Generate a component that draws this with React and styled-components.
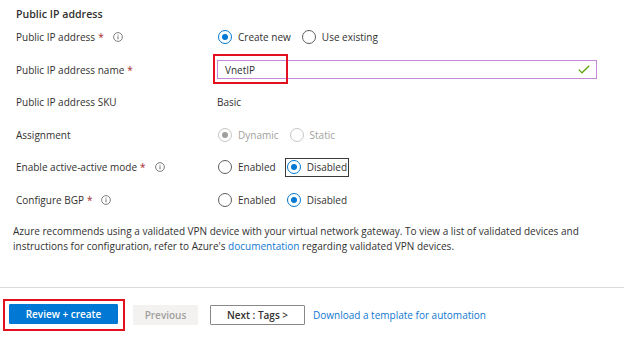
import React from "react";
import styled, { createGlobalStyle } from "styled-components";

const Global = createGlobalStyle`
  html, body { margin: 0; padding: 0; background: #fff; }
  body { font-family: "Open Sans", "Noto Sans", "Liberation Sans", sans-serif; color: #323130; }
  #root { width: 624px; height: 352px; overflow: hidden; }
`;

const Page = styled.div`
  width: 624px;
  height: 352px;
  display: flex;
  flex-direction: column;
  background: #fff;
`;

const Section = styled.div`
  display: flex;
  flex-direction: column;
  padding: 0 0 0 16px;
`;

const Title = styled.div`
  height: 27px;
  display: flex;
  align-items: center;
  font-size: 10.6px;
  font-weight: 600;
  color: #323130;
`;

const Rows = styled.div`
  display: flex;
  flex-direction: column;
  gap: 12.5px;
`;

const Row = styled.div`
  display: grid;
  grid-template-columns: 201px 1fr;
  align-items: center;
  height: 20px;
`;

const Label = styled.div`
  display: flex;
  align-items: center;
  font-size: 10px;
  color: #323130;
  white-space: nowrap;
`;

const Req = styled.span`
  color: #a4262c;
  margin-left: 3px;
`;

const InfoWrap = styled.span`
  display: inline-flex;
  margin-left: 9px;
`;

const Info = () => (
  <InfoWrap>
    <svg width="10" height="10" viewBox="0 0 10 10">
      <circle cx="5" cy="5" r="4.4" fill="none" stroke="#605e5c" strokeWidth="0.8" />
      <circle cx="5" cy="3" r="0.55" fill="#605e5c" />
      <line x1="5" y1="4.3" x2="5" y2="7.3" stroke="#605e5c" strokeWidth="0.9" />
    </svg>
  </InfoWrap>
);

const Value = styled.div`
  font-size: 10px;
  color: #323130;
`;

const Options = styled.div`
  display: flex;
  align-items: center;
  gap: 11px;
  padding-left: 1px;
`;

const Option = styled.div`
  display: flex;
  align-items: center;
  gap: 6px;
  font-size: 10px;
  color: ${(p) => (p.$disabled ? "#a19f9d" : "#323130")};
  outline: ${(p) => (p.$focus ? "1px solid #3b3a39" : "none")};
  outline-offset: 1px;
  height: 15px;
`;

const Circle = styled.span`
  box-sizing: border-box;
  width: 14px;
  height: 14px;
  border-radius: 50%;
  border: 1px solid
    ${(p) => (p.$disabled ? "#c8c6c4" : p.$checked ? "#0078d4" : "#605e5c")};
  display: flex;
  align-items: center;
  justify-content: center;
  &::after {
    content: "";
    display: ${(p) => (p.$checked ? "block" : "none")};
    width: 6px;
    height: 6px;
    border-radius: 50%;
    background: ${(p) => (p.$disabled ? "#a19f9d" : "#0078d4")};
  }
`;

const Radio = ({ label, checked, disabled, focus }) => (
  <Option $disabled={disabled} $focus={focus}>
    <Circle $checked={checked} $disabled={disabled} />
    {label}
  </Option>
);

const InputBox = styled.div`
  position: relative;
  box-sizing: border-box;
  width: 380px;
  height: 19px;
  border: 1px solid #c48ad6;
  display: flex;
  align-items: center;
  justify-content: space-between;
  padding: 0 6px 0 7px;
  font-size: 10px;
  color: #323130;
`;

const Highlight = styled.div`
  position: absolute;
  box-sizing: border-box;
  left: -5px;
  top: -7px;
  width: 75px;
  height: 30px;
  border: 2px solid #e3101e;
  pointer-events: none;
`;

const Note = styled.p`
  margin: 14px 30px 0 13px;
  font-size: 10px;
  line-height: 15px;
  color: #323130;
`;

const Link = styled.a`
  color: #0f78d0;
  text-decoration: none;
`;

const Spacer = styled.div`
  flex: 1;
`;

const Separator = styled.div`
  height: 1px;
  background: #dcdcdc;
  margin-bottom: 11px;
`;

const Footer = styled.div`
  display: flex;
  align-items: center;
  padding: 0 0 0 3px;
  height: 32px;
  margin-bottom: 21px;
`;

const Annotate = styled.div`
  box-sizing: border-box;
  border: 2px solid #e3101e;
  padding: 3px 5px 5px 4px;
  display: flex;
  margin-right: 8px;
`;

const Button = styled.button`
  box-sizing: border-box;
  height: 20px;
  width: ${(p) => p.$w}px;
  font-family: inherit;
  font-size: 10px;
  font-weight: 600;
  padding: 0;
  border-radius: 1px;
  margin-right: ${(p) => p.$mr || 0}px;
  cursor: pointer;
  ${(p) =>
    p.$variant === "primary"
      ? `background: #0078d4; color: #fff; border: 1px solid #0078d4;`
      : p.$variant === "disabled"
      ? `background: #f3f2f1; color: #a19f9d; border: 1px solid #f3f2f1;`
      : `background: #fff; color: #323130; border: 1px solid #8a8886;`}
`;

const FooterLink = styled.a`
  font-size: 10px;
  color: #0f78d0;
  text-decoration: none;
`;

export default function App() {
  return (
    <Page>
      <Global />
      <Section>
        <Title>Public IP address</Title>
        <Rows>
          <Row>
            <Label>
              Public IP address<Req>*</Req>
              <Info />
            </Label>
            <Options>
              <Radio label="Create new" checked />
              <Radio label="Use existing" />
            </Options>
          </Row>
          <Row>
            <Label>
              Public IP address name<Req>*</Req>
            </Label>
            <InputBox>
              VnetIP
              <svg width="12" height="9" viewBox="0 0 12 9">
                <path d="M0.8 4.6 L4 7.8 L11.2 0.8" fill="none" stroke="#57a300" strokeWidth="1.2" />
              </svg>
              <Highlight />
            </InputBox>
          </Row>
          <Row>
            <Label>Public IP address SKU</Label>
            <Value>Basic</Value>
          </Row>
          <Row>
            <Label>Assignment</Label>
            <Options>
              <Radio label="Dynamic" checked disabled />
              <Radio label="Static" disabled />
            </Options>
          </Row>
          <Row>
            <Label>
              Enable active-active mode<Req>*</Req>
              <Info />
            </Label>
            <Options>
              <Radio label="Enabled" />
              <Radio label="Disabled" checked focus />
            </Options>
          </Row>
          <Row>
            <Label>
              Configure BGP<Req>*</Req>
              <Info />
            </Label>
            <Options>
              <Radio label="Enabled" />
              <Radio label="Disabled" checked />
            </Options>
          </Row>
        </Rows>
      </Section>
      <Note>
        Azure recommends using a validated VPN device with your virtual network gateway. To view a
        list of validated devices and instructions for configuration, refer to Azure's{" "}
        <Link href="#">documentation</Link> regarding validated VPN devices.
      </Note>
      <Spacer />
      <Separator />
      <Footer>
        <Annotate>
          <Button $variant="primary" $w={109}>Review + create</Button>
        </Annotate>
        <Button $variant="disabled" $w={65} $mr={12}>Previous</Button>
        <Button $w={95} $mr={8}>Next : Tags &gt;</Button>
        <FooterLink href="#">Download a template for automation</FooterLink>
      </Footer>
    </Page>
  );
}
